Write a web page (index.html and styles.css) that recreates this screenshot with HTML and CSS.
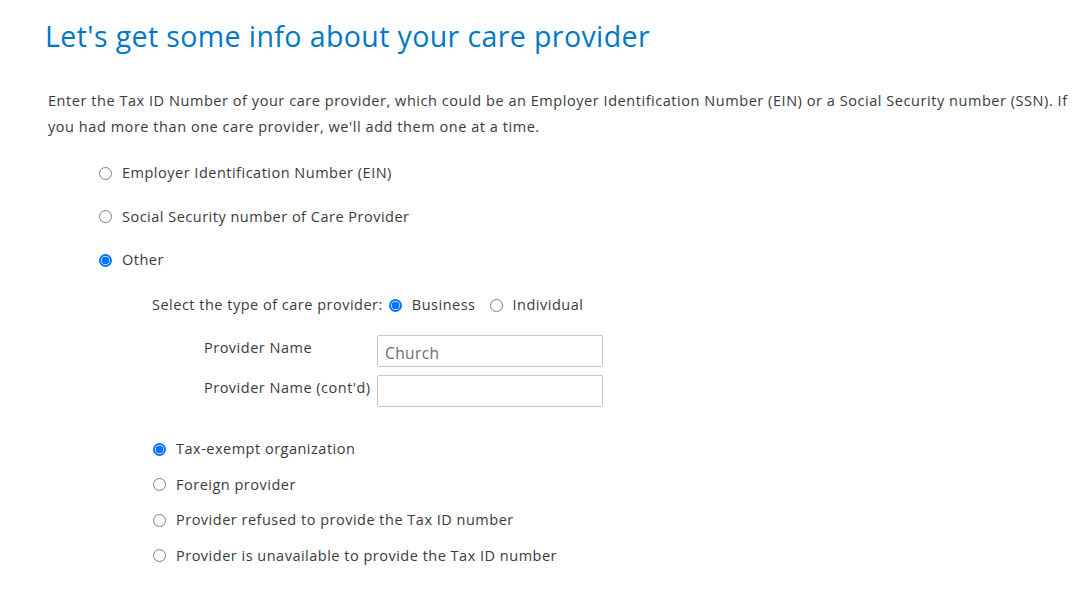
FILE: index.html
```html
<!DOCTYPE html>
<html lang="en">
<head>
<meta charset="utf-8">
<title>Care provider info</title>
<link rel="stylesheet" href="styles.css">
</head>
<body>
<main class="page">
  <h1 class="title">Let's get some info about your care provider</h1>
  <p class="intro">Enter the Tax ID Number of your care provider, which could be an Employer Identification Number (EIN) or a Social Security number (SSN). If you had more than one care provider, we'll add them one at a time.</p>

  <div class="options">
    <label class="opt"><input class="radio" type="radio" name="tin"><span>Employer Identification Number (EIN)</span></label>
    <label class="opt"><input class="radio" type="radio" name="tin"><span>Social Security number of Care Provider</span></label>
    <label class="opt"><input class="radio" type="radio" name="tin" checked><span>Other</span></label>
  </div>

  <section class="other">
    <div class="type-row">
      <span class="type-label">Select the type of care provider:</span>
      <label class="inline-opt"><input class="radio" type="radio" name="kind" checked><span>Business</span></label>
      <label class="inline-opt"><input class="radio" type="radio" name="kind"><span>Individual</span></label>
    </div>

    <div class="fields">
      <div class="field">
        <label class="field-label" for="pn1">Provider Name</label>
        <input class="text-input" id="pn1" type="text" value="Church">
      </div>
      <div class="field">
        <label class="field-label" for="pn2">Provider Name (cont'd)</label>
        <input class="text-input" id="pn2" type="text" value="">
      </div>
    </div>

    <div class="sub-options">
      <label class="sub-opt"><input class="radio" type="radio" name="reason" checked><span>Tax-exempt organization</span></label>
      <label class="sub-opt"><input class="radio" type="radio" name="reason"><span>Foreign provider</span></label>
      <label class="sub-opt"><input class="radio" type="radio" name="reason"><span>Provider refused to provide the Tax ID number</span></label>
      <label class="sub-opt"><input class="radio" type="radio" name="reason"><span>Provider is unavailable to provide the Tax ID number</span></label>
    </div>
  </section>
</main>
</body>
</html>
```

FILE: styles.css
```css
* { box-sizing: border-box; }

body {
  margin: 0;
  background: #ffffff;
  color: #393a3d;
  font-family: "Open Sans", "Noto Sans", sans-serif;
  font-size: 14.5px;
  letter-spacing: 0.5px;
}

.page {
  padding: 14px 0 0 45px;
}

.title {
  margin: 0;
  font-weight: 400;
  font-size: 28.5px;
  letter-spacing: 0.4px;
  line-height: 44px;
  color: #0077c5;
}

.intro {
  margin: 30px 0 0 3px;
  max-width: 1036px;
  line-height: 26px;
  letter-spacing: 0.55px;
}

.radio {
  appearance: none;
  -webkit-appearance: none;
  width: 13px;
  height: 13px;
  margin: 0;
  border: 1px solid #808080;
  border-radius: 50%;
  background: #fff;
  flex: none;
}

.radio:checked {
  border-color: #0075ff;
  background: radial-gradient(circle, #0075ff 0 3.6px, #fff 4.2px 100%);
  border-width: 2px;
}

.options {
  margin: 22px 0 0 54px;
  display: flex;
  flex-direction: column;
  gap: 21.5px;
}

.opt, .sub-opt, .inline-opt {
  display: flex;
  align-items: center;
  gap: 10px;
  line-height: 22px;
}

.other {
  margin: 23px 0 0 107px;
}

.type-row {
  display: flex;
  align-items: center;
  line-height: 22px;
}

.type-label { margin-right: 6px; }

.inline-opt { margin-right: 14px; }

.fields {
  margin: 19px 0 0 52px;
  display: flex;
  flex-direction: column;
  gap: 8px;
}

.field {
  display: flex;
  align-items: flex-start;
}

.field-label {
  width: 173px;
  padding-top: 2px;
  line-height: 22px;
}

.text-input {
  width: 226px;
  height: 32px;
  border: 1px solid #c6c6c6;
  border-radius: 2px;
  padding: 3px 7px 0;
  font: inherit;
  font-size: 15.5px;
  letter-spacing: 0.4px;
  color: #6b6c72;
  outline: none;
}

.sub-options {
  margin: 31px 0 0 1px;
  display: flex;
  flex-direction: column;
  gap: 13.5px;
}
```
